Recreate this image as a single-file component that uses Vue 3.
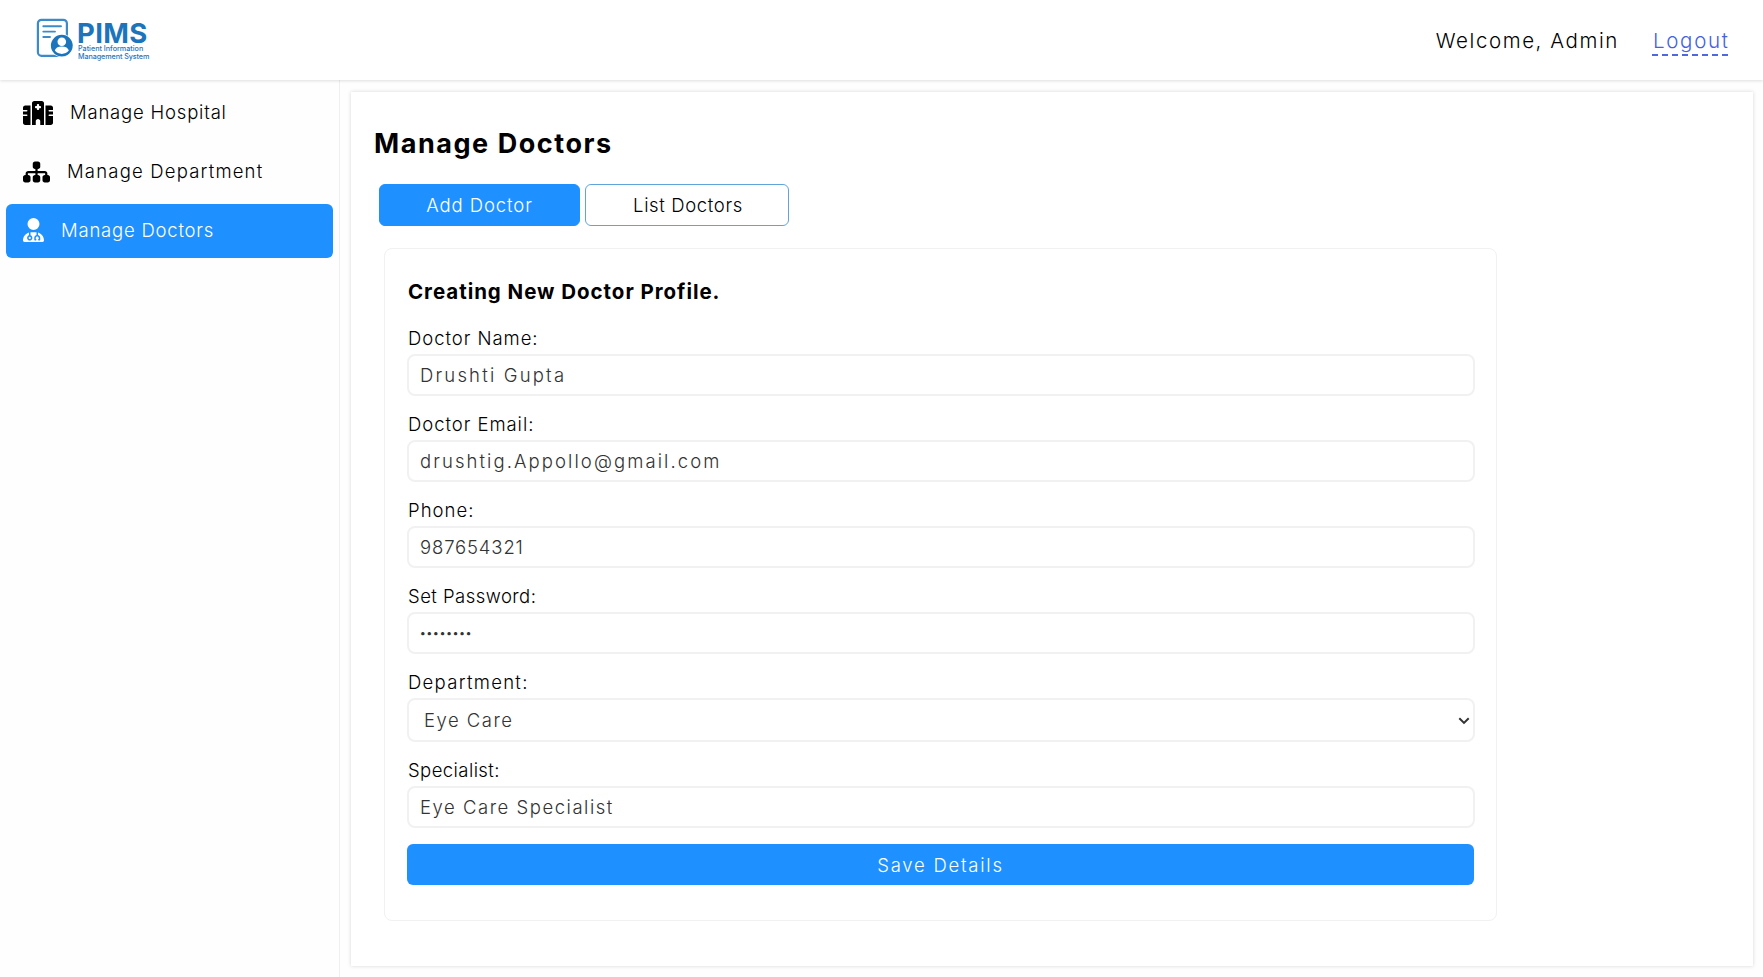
<script setup>
import { ref } from 'vue'

const menu = [
  {
    key: 'hospital',
    label: 'Manage Hospital',
    width: 640,
    path: 'M192 48c0-26.5 21.5-48 48-48H400c26.5 0 48 21.5 48 48V512H368V432c0-26.5-21.5-48-48-48s-48 21.5-48 48v80H192V48zM48 96H160V512H48c-26.5 0-48-21.5-48-48V320H80c8.8 0 16-7.2 16-16s-7.2-16-16-16H0V224H80c8.8 0 16-7.2 16-16s-7.2-16-16-16H0V144c0-26.5 21.5-48 48-48zm544 0c26.5 0 48 21.5 48 48v48H560c-8.8 0-16 7.2-16 16s7.2 16 16 16h80v64H560c-8.8 0-16 7.2-16 16s7.2 16 16 16h80V464c0 26.5-21.5 48-48 48H480V96H592zM312 64c-8.8 0-16 7.2-16 16v24H272c-8.8 0-16 7.2-16 16v16c0 8.8 7.2 16 16 16h24v24c0 8.8 7.2 16 16 16h16c8.8 0 16-7.2 16-16V152h24c8.8 0 16-7.2 16-16V120c0-8.8-7.2-16-16-16H344V80c0-8.8-7.2-16-16-16H312z',
  },
  {
    key: 'department',
    label: 'Manage Department',
    width: 576,
    path: 'M208 80c0-26.5 21.5-48 48-48h64c26.5 0 48 21.5 48 48v64c0 26.5-21.5 48-48 48h-8v40H464c30.9 0 56 25.1 56 56v32h8c26.5 0 48 21.5 48 48v64c0 26.5-21.5 48-48 48H464c-26.5 0-48-21.5-48-48V368c0-26.5 21.5-48 48-48h8V288c0-4.4-3.6-8-8-8H312v40h8c26.5 0 48 21.5 48 48v64c0 26.5-21.5 48-48 48H256c-26.5 0-48-21.5-48-48V368c0-26.5 21.5-48 48-48h8V280H112c-4.4 0-8 3.6-8 8v32h8c26.5 0 48 21.5 48 48v64c0 26.5-21.5 48-48 48H48c-26.5 0-48-21.5-48-48V368c0-26.5 21.5-48 48-48h8V288c0-30.9 25.1-56 56-56H264V192h-8c-26.5 0-48-21.5-48-48V80z',
  },
  {
    key: 'doctors',
    label: 'Manage Doctors',
    width: 448,
    active: true,
    path: 'M224 256a128 128 0 1 0 0-256 128 128 0 1 0 0 256zm-96 55.2C54 332.9 0 401.3 0 482.3C0 498.7 13.3 512 29.7 512H418.3c16.4 0 29.7-13.3 29.7-29.7c0-81-54-149.4-128-171.1V362c27.6 7.1 48 32.2 48 62v40c0 8.8-7.2 16-16 16H336c-8.8 0-16-7.2-16-16s7.2-16 16-16V424c0-17.7-14.3-32-32-32s-32 14.3-32 32v24c8.8 0 16 7.2 16 16s-7.2 16-16 16H256c-8.8 0-16-7.2-16-16V424c0-29.8 20.4-54.9 48-62V304.9c-6-.6-12.1-.9-18.3-.9H178.3c-6.2 0-12.3 .3-18.3 .9v65.4c23.1 6.9 40 28.3 40 53.7c0 30.9-25.1 56-56 56s-56-25.1-56-56c0-25.4 16.9-46.8 40-53.7V311.2zM144 448a24 24 0 1 0 0-48 24 24 0 1 0 0 48z',
  },
]

const fields = ref([
  { key: 'name', label: 'Doctor Name:', type: 'text', value: 'Drushti Gupta' },
  { key: 'email', label: 'Doctor Email:', type: 'text', value: 'drushtig.Appollo@gmail.com' },
  { key: 'phone', label: 'Phone:', type: 'text', value: '987654321' },
  { key: 'password', label: 'Set Password:', type: 'password', value: 'drushti1' },
  { key: 'dept', label: 'Department:', type: 'select', value: 'Eye Care' },
  { key: 'specialist', label: 'Specialist:', type: 'text', value: 'Eye Care Specialist' },
])
</script>

<template>
  <div class="app">
    <header class="topbar">
      <div class="logo">
        <svg class="logo-mark" width="37" height="40" viewBox="0 0 37 40">
          <rect x="1.9" y="1.8" width="29" height="36" rx="3.6" fill="none" stroke="#3d8ac9" stroke-width="2.2" />
          <path d="M7.3 8.3H25M7.3 13.6H19M7.3 19H14" fill="none" stroke="#3d8ac9" stroke-width="1.9" stroke-linecap="round" />
          <circle cx="25.8" cy="27.6" r="11.6" fill="#fff" />
          <circle cx="25.8" cy="27.6" r="10.9" fill="#1c75bc" />
          <circle cx="25.8" cy="23.8" r="4.3" fill="#fff" />
          <path d="M18.8 32.6c.6-2.700 3-4.200 7-4.200s6.400 1.500 7 4.200c-1.800 2.200-4.200 3.300-7 3.300s-5.200-1.100-7-3.300z" fill="#fff" />
        </svg>
        <div class="logo-text">
          <strong>PIMS</strong>
          <span class="tag-one">Patient Information</span>
          <span class="tag-two">Management System</span>
        </div>
      </div>
      <div class="account">
        <span class="welcome">Welcome, Admin</span>
        <a class="logout">Logout</a>
      </div>
    </header>

    <div class="body">
      <nav class="sidebar">
        <a v-for="m in menu" :key="m.key" class="item" :class="[m.key, { active: m.active }]">
          <svg height="24" :width="(m.width * 24) / 512" :viewBox="`0 0 ${m.width} 512`">
            <path :d="m.path" fill="currentColor" />
          </svg>
          <span>{{ m.label }}</span>
        </a>
      </nav>

      <main class="panel">
        <h1>Manage Doctors</h1>
        <div class="tabs">
          <button class="tab add">Add Doctor</button>
          <button class="tab list">List Doctors</button>
        </div>

        <form class="card" @submit.prevent>
          <h2>Creating New Doctor Profile.</h2>
          <div v-for="f in fields" :key="f.key" class="field" :class="'f-' + f.key">
            <label :for="f.key">{{ f.label }}</label>
            <div v-if="f.type === 'select'" class="select">
              <select :id="f.key" v-model="f.value">
                <option>Eye Care</option>
              </select>
              <svg width="12" height="8" viewBox="0 0 12 8">
                <path d="M1.3 1.3L6 5.9L10.7 1.3" fill="none" stroke="#333" stroke-width="2" />
              </svg>
            </div>
            <input v-else :id="f.key" v-model="f.value" :type="f.type" />
          </div>
          <button class="save">Save Details</button>
        </form>
      </main>
    </div>
  </div>
</template>

<style>
body {
  background: #fefefe;
  overflow: hidden;
}
</style>

<style scoped>
.app,
.app * {
  box-sizing: border-box;
}
.app {
  height: 977px;
  display: flex;
  flex-direction: column;
  font-family: Inter, "Open Sans", sans-serif;
  font-size: 18.5px;
  font-weight: 300;
  color: #000;
  background: #fefefe;
}
.topbar {
  height: 80px;
  flex: none;
  display: flex;
  justify-content: space-between;
  padding: 0 35px 0 36px;
  background: #fff;
  box-shadow: 0 1px 3px rgba(0, 0, 0, 0.13);
  position: relative;
}
.logo {
  display: flex;
  gap: 4px;
  padding-top: 18px;
}
.logo-mark {
  display: block;
}
.logo-text {
  display: flex;
  flex-direction: column;
  color: #1c75bc;
  white-space: nowrap;
}
.logo-text strong {
  margin-top: 3px;
  font-size: 27.5px;
  line-height: 24px;
  letter-spacing: 0.4px;
  font-weight: 700;
}
.logo-text span {
  margin-left: 1px;
  font-size: 7.2px;
  line-height: 8px;
  font-weight: 500;
}
.logo-text .tag-two {
  letter-spacing: -0.08px;
}
.account {
  display: flex;
  align-items: flex-start;
  gap: 35px;
  padding-top: 24px;
  font-size: 20.5px;
  line-height: 34px;
}
.welcome {
  letter-spacing: 1.58px;
  margin-right: -2px;
}
.logout {
  height: 32px;
  width: 76px;
  padding-left: 1px;
  letter-spacing: 1.7px;
  color: #4361e0;
  border-bottom: 2px dashed #4f68e0;
}
.body {
  flex: 1;
  min-height: 0;
  display: flex;
}
.sidebar {
  width: 340px;
  flex: none;
  display: flex;
  flex-direction: column;
  gap: 5px;
  padding: 6px 6px 0;
  border-right: 1px solid #efefef;
}
.item {
  height: 54px;
  display: flex;
  align-items: center;
  gap: 17px;
  padding-left: 17px;
  border-radius: 6px;
}
.item svg {
  flex: none;
  margin-top: -1px;
}
.item span {
  margin-top: -2px;
}
.item.hospital span {
  letter-spacing: 0.8px;
}
.item.department span {
  letter-spacing: 1.19px;
}
.item.doctors span {
  letter-spacing: 0.79px;
}
.item.active {
  background: #1e90ff;
  color: #fff;
}
.item.active svg {
  margin-top: -3px;
}
.panel {
  width: 1402px;
  height: 874px;
  margin: 12px 0 0 11px;
  padding: 35px 22px 0;
  background: #fff;
  box-shadow: 0 0 4px rgba(0, 0, 0, 0.16);
}
h1 {
  margin: 0 0 0 1px;
  font-size: 27px;
  line-height: 34px;
  font-weight: 700;
  letter-spacing: 1.55px;
}
.tabs {
  display: flex;
  gap: 5px;
  margin: 23px 0 0 6px;
}
.tab {
  height: 42px;
  padding: 0;
  font: inherit;
  color: #000;
  background: #fff;
  border: 1px solid #5fa5dc;
  border-radius: 6px;
}
.add {
  width: 201px;
  letter-spacing: 0.92px;
  background: #1e90ff;
  border-color: #1e90ff;
  color: #fff;
}
.list {
  width: 204px;
  padding-left: 2px;
  letter-spacing: 0.64px;
}
.card {
  width: 1113px;
  height: 673px;
  margin: 22px 0 0 11px;
  padding: 26px 21px 0 22px;
  border: 1px solid #f1f1f1;
  border-radius: 8px;
  display: flex;
  flex-direction: column;
}
h2 {
  margin: 0 0 14px 1px;
  font-size: 20.5px;
  line-height: 34px;
  font-weight: 700;
  letter-spacing: 0.96px;
}
.field {
  margin-bottom: 13px;
  display: flex;
  flex-direction: column;
}
label {
  margin-bottom: 1px;
  line-height: 30px;
  padding-left: 1px;
  color: #000;
}
input,
select {
  width: 100%;
  height: 42px;
  margin: 0;
  padding: 0 11px 1px;
  font: inherit;
  color: #333;
  background: #fff;
  border: 2px solid #f1f1f1;
  border-radius: 8px;
  outline: none;
}
select {
  height: 44px;
  padding-left: 15px;
  appearance: none;
  display: block;
}
.select {
  position: relative;
}
.select svg {
  position: absolute;
  right: 5px;
  top: 19px;
}
.f-name label {
  letter-spacing: 0.95px;
}
.f-email label {
  letter-spacing: 0.95px;
}
.f-phone label {
  letter-spacing: 1.03px;
}
.f-password label {
  letter-spacing: 0.46px;
}
.f-dept label {
  letter-spacing: 1.29px;
}
.f-specialist label {
  letter-spacing: 0.42px;
}
#name {
  letter-spacing: 2.18px;
}
#email {
  letter-spacing: 2.08px;
}
#phone {
  letter-spacing: 0.85px;
}
#password {
  padding-bottom: 0;
  font-size: 10.5px;
  font-weight: 500;
  letter-spacing: 0.95px;
}
#dept {
  letter-spacing: 1.5px;
}
#specialist {
  letter-spacing: 1.53px;
}
.save {
  height: 41px;
  margin: 3px 1px 0 0;
  padding: 0;
  font: inherit;
  letter-spacing: 1.76px;
  color: #fff;
  background: #1e90ff;
  border: 0;
  border-radius: 6px;
}
</style>
